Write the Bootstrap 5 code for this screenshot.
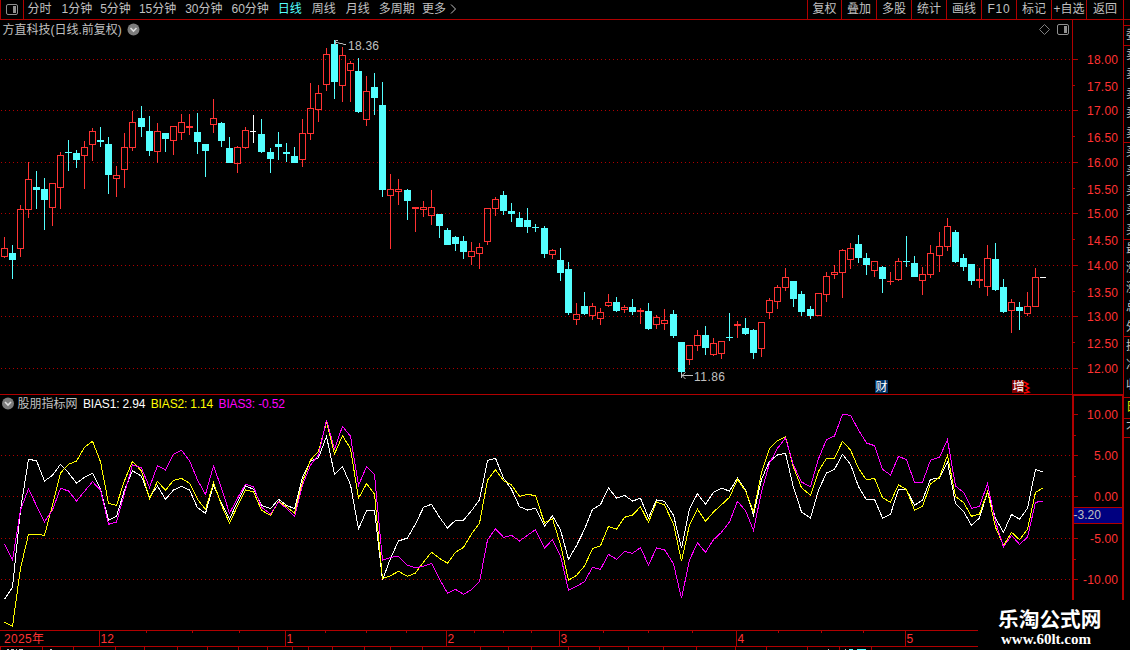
<!DOCTYPE html>
<html lang="zh-CN">
<head>
  <meta charset="UTF-8" />
  <title>方直科技 日线</title>
  <link href="https://cdn.jsdelivr.net/npm/bootstrap@5.3.0/dist/css/bootstrap.min.css" rel="stylesheet" />
  <style>
    :root { --line: #b00000; --rojo: #ff3232; --gris: #c0c0c0; }
    body { width: 1130px; height: 650px; background: #000; color: var(--gris);
      font: 12px/1 "Liberation Sans", "Noto Sans CJK SC", sans-serif; }
    svg { display: block; flex: none; }
    .topbar { height: 20px; border-bottom: 1px solid var(--line); }
    .topbar span { line-height: 19px; white-space: nowrap; }
    .panel-btn { width: 24px; border-left: 1px solid var(--line); border-right: 1px solid var(--line); margin-right: 3.5px; }
    .p2 { width: 34px; } .p3 { width: 38.7px; } .p4 { width: 46.3px; } .pm { width: 43.3px; }
    .activo { color: #54ffff; }
    .tools { margin-left: auto; width: 316px; }
    .tools span { width: 35px; border-left: 1px solid var(--line); text-align: center; }
    .tools span:first-child { width: 34px; }
    .tools span:last-child { width: 37px; }
    .tools .f10 { letter-spacing: .8px; }
    .lado { width: 7px; border-left: 1px solid var(--line); }
    .left-col { width: 1123px; }
    .pane-title { height: 19px; width: 1073px; border-right: 1px solid var(--line); padding: 0 3px 0 2.5px; }
    .bias-title { height: 17px; width: 1074px; border-right: 2px solid var(--line); padding-left: 2px; }
    .bias-title span { margin-right: 6px; white-space: pre; }
    .bias-title .valor { letter-spacing: -.15px; margin-left: -.6px; }
    #bias { overflow: visible; }
    .side { width: 7px; border-left: 1px solid var(--line); padding-left: 2px; }
    .side div { white-space: nowrap; height: 19.4px; line-height: 19px; }
    .side .grupo { height: 97px; border-top: 1px solid var(--line); margin-left: -2px; padding-left: 2px; }
    .marca { right: 0; bottom: 0; width: 152px; height: 50px; background: #000; color: #fff; padding: 5px 0 0 20px; }
    .marca .nombre { font: bold 20.7px/27px "Noto Sans CJK SC", sans-serif; white-space: nowrap; }
    .marca .web { font: bold 15px/14px "Liberation Serif", serif; padding-left: 3px; }
  </style>
</head>
<body class="m-0 overflow-hidden position-relative d-flex flex-column">
  <!-- Barra de periodos -->
  <div class="topbar d-flex flex-shrink-0">
    <div class="panel-btn d-flex align-items-center justify-content-center">
      <svg width="12" height="11"><rect x=".5" y=".5" width="11" height="10" rx="1.5" fill="none" stroke="#909090"/><rect x="7" y="2" width="3" height="7" fill="#909090"/></svg>
    </div>
    <span class="p2">分时</span><span class="p3">1分钟</span><span class="p3">5分钟</span>
    <span class="p4">15分钟</span><span class="p4">30分钟</span><span class="p4">60分钟</span>
    <span class="p2 activo">日线</span><span class="p2">周线</span><span style="width:33px">月线</span>
    <span class="pm">多周期</span><span>更多</span>
    <svg width="11" height="18"><path d="M5 4.5L9.5 9L5 13.5" fill="none" stroke="#c0c0c0"/></svg>
    <div class="tools d-flex flex-shrink-0">
      <span>复权</span><span>叠加</span><span>多股</span><span>统计</span><span>画线</span><span class="f10">F10</span><span>标记</span><span>+自选</span><span>返回</span>
    </div>
    <div class="lado"></div>
  </div>

  <div class="d-flex">
    <div class="left-col">
      <!-- Precio -->
      <div class="pane-title d-flex align-items-center">
        <span>方直科技(日线.前复权)</span>
        <svg class="ms-1" width="14" height="14"><circle cx="7.5" cy="6.5" r="6" fill="#7c7c7c"/><path d="M4.5 5L7.5 8L10.5 5" fill="none" stroke="#ddd" stroke-width="1.6"/></svg>
        <svg class="ms-auto" width="31" height="13"><path d="M6.5 1.5L11.5 6.5L6.5 11.5L1.5 6.5Z" fill="none" stroke="#808080"/><rect x="19.5" y="1.5" width="11" height="10" rx="1.5" fill="none" stroke="#909090"/><rect x="26" y="3" width="3" height="7" fill="#909090"/></svg>
      </div>
      <svg id="precio" width="1123" height="356" viewBox="0 39 1123 356"></svg>
      <!-- Indicador -->
      <div class="bias-title d-flex align-items-center">
        <svg width="13" height="14"><circle cx="6" cy="6.5" r="6" fill="#7c7c7c"/><path d="M3 5L6 8L9 5" fill="none" stroke="#ddd" stroke-width="1.6"/></svg>
        <span style="margin-left:2.5px">股朋指标网</span>
        <span class="valor text-white">BIAS1: 2.94</span>
        <span class="valor" style="color:#ffff00">BIAS2: 1.14</span>
        <span class="valor" style="color:#ff00ff">BIAS3: -0.52</span>
      </div>
      <svg id="bias" width="1123" height="218" viewBox="0 412 1123 218"></svg>
      <svg id="fechas" width="1123" height="20" viewBox="0 630 1123 20"></svg>
    </div>
    <!-- Columna de cotizaciones, cortada por el borde -->
    <div class="side overflow-hidden">
      <div style="height:5px"></div>
      <div style="border-top:1px solid var(--line);margin-left:-2px;padding-left:2px;height:20px">委比</div>
      <div class="grupo"><div>卖五</div><div>卖四</div><div>卖三</div><div>卖二</div><div>卖一</div></div>
      <div class="grupo"><div>买一</div><div>买二</div><div>买三</div><div>买四</div><div>买五</div></div>
      <div class="grupo"><div>最新</div><div>涨跌</div><div>涨幅</div><div>总量</div><div>外盘</div></div>
      <div class="grupo" style="height:61px"><div>换手</div><div>净资</div><div>收益</div></div>
      <div class="grupo" style="height:21px;color:#e0e000">日</div>
      <div class="grupo" style="height:19px">不</div>
      <div class="grupo"></div>
    </div>
  </div>

  <div class="marca position-absolute">
    <div class="nombre">乐淘公式网</div>
    <div class="web">www.60lt.com</div>
  </div>

  <script>
    // maximo, techo, base, minimo, tipo (r sube, c baja, w sin cambio)
    const velas = `237,248,257,258,r 245,253,260,279,c 205,209,249,257,r 162,179,210,218,r 171,187,190,209,c
178,189,200,230,c 183,183,208,226,r 152,155,188,209,r 140,152,153,171,c 150,153,160,168,c
141,147,156,189,r 128,131,145,161,r 127,140,142,147,c 137,144,175,194,c 166,175,179,197,r
133,147,170,188,r 111,122,148,151,r 106,118,127,137,c 116,131,151,156,c 123,131,152,163,r
133,133,139,152,c 126,126,141,155,r 114,122,133,140,r 114,126,128,135,r 113,132,142,154,c
144,144,151,177,c 99,118,125,133,r 122,123,141,147,c 137,148,163,163,c 146,147,164,173,r
127,130,148,149,r 115,131,132,143,w 119,134,152,153,c 148,152,159,173,c 132,144,147,160,c
143,152,154,162,c 147,156,163,163,c 119,133,160,167,r 83,108,134,140,r 85,93,110,122,r
48,54,85,91,r 40,44,82,99,c 47,55,86,102,r 61,63,71,102,r 58,71,112,113,c
76,91,120,126,r 73,87,98,115,c 82,105,190,197,c 174,189,196,249,r 179,189,192,205,r
189,190,201,220,c 207,207,209,232,r 201,207,210,217,r 190,207,216,225,r 214,214,226,238,c
228,230,245,245,c 236,237,244,251,c 236,241,252,259,c 242,251,257,265,r 243,247,254,269,r
208,208,242,245,r 197,199,209,216,r 191,195,211,215,c 203,211,214,222,c 212,218,227,227,c
208,220,227,233,c 224,227,228,232,c 226,228,254,258,c 249,250,255,259,r 248,260,273,281,c
262,269,313,315,c 303,314,320,325,r 292,306,314,315,c 303,306,316,320,r 308,312,319,325,r
294,302,306,307,r 297,302,311,312,c 305,307,310,313,r 299,307,312,315,c 308,310,312,324,r
303,311,329,330,c 315,317,325,329,r 309,320,324,330,r 310,314,336,338,c 342,342,372,374,c
345,345,360,365,r 330,335,346,351,r 326,335,348,355,c 338,343,355,356,r 341,341,354,359,r
313,337,338,341,c 321,324,326,338,r 318,328,334,335,c 329,330,353,359,c 322,322,349,357,r
298,300,313,319,r 285,287,302,309,r 268,277,288,291,r 281,281,299,307,c 291,294,312,316,c
306,309,316,319,c 293,293,316,316,r 272,276,295,302,r 265,272,275,279,r 249,250,273,298,r
243,248,260,269,r 235,244,258,263,c 253,258,265,275,c 261,261,271,277,r 266,267,279,293,c
272,281,282,285,r 258,261,280,281,r 236,261,262,267,c 256,263,277,277,c 267,274,281,295,r
245,253,275,278,r 232,246,256,272,r 218,226,247,251,r 230,232,262,263,c 254,258,267,271,c
264,264,281,285,c 268,279,281,288,r 245,258,287,296,r 243,259,290,291,c 279,287,312,313,c
299,302,311,333,r 302,307,311,330,c 292,306,314,316,r 268,277,307,307,r`.split(/\s+/).map(v => v.split(","));

    // series BIAS en tercios de pixel, medidas desde y=390
    const series = [
      ["#ffffff", [628,592,360,208,212,273,256,223,248,280,262,250,298,390,379,300,242,259,322,288,328,300,289,300,353,370,285,340,388,335,287,298,346,356,328,346,356,
        262,213,203,139,253,230,284,417,362,361,570,505,453,444,402,352,343,382,414,391,391,362,330,211,205,264,298,350,360,355,409,377,420,508,467,418,
        358,344,293,325,316,333,325,384,330,334,376,475,356,311,343,307,295,303,265,300,375,268,214,195,190,293,366,384,300,249,238,193,223,290,330,
        328,384,373,298,299,346,330,268,265,215,340,364,406,384,305,385,427,373,388,355,238,246]],
      ["#ffff00", [697,709,535,433,433,436,345,249,223,213,172,154,215,340,346,272,214,243,326,274,301,271,265,280,328,358,278,345,400,348,300,305,361,376,334,350,370,
        275,210,184,97,192,137,176,325,281,312,566,557,544,559,549,516,487,505,520,487,472,432,400,270,239,272,285,319,313,317,399,386,464,571,556,528,
        476,467,409,418,382,375,350,397,336,345,402,514,404,358,394,366,344,322,268,303,365,248,175,152,140,232,293,316,244,205,205,154,180,235,270,
        265,323,337,284,299,360,349,282,262,196,320,337,379,372,305,412,467,427,449,418,307,295]],
      ["#ff00ff", [463,511,360,296,347,395,360,295,303,333,304,275,300,403,396,310,224,234,292,227,240,193,181,212,270,313,228,295,370,325,283,290,352,372,336,355,380,
        285,225,195,89,177,109,139,286,230,254,511,502,499,526,533,529,520,567,609,598,613,599,575,450,416,442,436,453,436,419,474,449,497,601,589,575,
        532,538,493,508,484,490,473,525,474,479,521,625,510,458,487,449,427,396,334,362,421,305,220,175,144,226,276,290,206,149,138,73,76,120,159,
        167,238,255,199,209,277,277,211,202,149,288,307,355,349,281,395,471,436,463,442,337,334]]
    ];

    const posX = i => Math.floor(4.02 + 8.0602 * i);
    const rect = (x, y, w, h, c) => `<rect x="${x}" y="${y}" width="${w}" height="${h}" fill="${c}"/>`;
    const texto = (x, y, t, c, w, extra = "") => `<text x="${x}" y="${y}" fill="${c}" ${w ? `textLength="${w}"` : ""} ${extra}>${t}</text>`;
    const rejilla = y => `<path d="M1 ${y + .5}H1072" stroke="#b00000" stroke-dasharray="1 3" shape-rendering="crispEdges"/>`;
    const L = "#b00000", R = "#ff3232";

    // Grafico de precio
    let p = "";
    [59, 110, 162, 213, 265, 316, 368].forEach((y, i) => {
      p += rejilla(y) + rect(1073, y, 5, 1, L);
      p += texto(1087, y + 5, (18 - i).toFixed(2), R, 31);
    });
    [85, 136, 188, 239, 291, 342].forEach((y, i) => {
      p += rect(1073, y, 2, 1, L) + texto(1087, y + 6, (17.5 - i).toFixed(2), R, 31);
    });
    velas.forEach(([hi, top, base, lo, tipo], i) => {
      hi = +hi; top = +top; base = +base; lo = +lo;
      const x = posX(i);
      const c = { r: R, c: "#54ffff", w: "#ffffff" }[tipo];
      if (top > hi) p += rect(x, hi, 1, top - hi, c);
      if (lo > base) p += rect(x, base, 1, lo - base, c);
      if (tipo === "r" && base - top > 2) {
        p += `<rect x="${x - 2.5}" y="${top + .5}" width="6" height="${base - top - 1}" fill="none" stroke="${c}"/>`;
      } else {
        p += rect(x - 3, top, tipo === "w" ? 6 : 7, base - top, c);
      }
    });
    p += rect(1040, 277, 6, 1, "#fff");
    p += `<path d="M335.5 45V40.5H338M335 42.5H337.5L340 43.5H342L344 44.5H346" fill="none" stroke="#c0c0c0"/>`;
    p += texto(348, 50, "18.36", "#c0c0c0", 31);
    p += `<path d="M682 375.5H693M685.5 372.5L682 375.5L685.5 379M681.5 373V378" fill="none" stroke="#c0c0c0"/>`;
    p += texto(694, 381, "11.86", "#c0c0c0", 31);
    p += rect(875, 380, 13, 13, "#003468") + texto(875.5, 391, "财", "#fff", 12);
    p += `<path d="M1024 382l4 2l-3 2l4 2l-3 2l3 2l-5 1" fill="none" stroke="#f00" stroke-width="1.5"/>`;
    p += rect(1012, 380, 12, 13, "#800000") + texto(1012.5, 391, "增", "#fff", 12);
    p += rect(1072, 39, 1, 355, L) + rect(0, 394, 1123, 1, L);
    document.getElementById("precio").innerHTML = p;

    // Grafico BIAS
    let b = "";
    [455, 496, 538, 579].forEach(y => b += rejilla(y));
    [[414, "10.00", 1087], [455, "5.00", 1094], [496, "0.00", 1094], [538, "-5.00", 1090], [579, "-10.00", 1083]].forEach(([y, t, x]) => {
      b += rect(1074, y, 4, 1, L) + texto(x, y + 5, t, R, 1118 - x);
    });
    [435, 476, 559].forEach(y => b += rect(1074, y, 2, 1, L));
    series.forEach(([c, ys]) => {
      const pts = ys.map((y, i) => `${i === 129 ? 1042.5 : posX(i) + .5},${(y / 3 + 390).toFixed(1)}`).join(" ");
      b += `<polyline points="${pts}" fill="none" stroke="${c}" shape-rendering="crispEdges"/>`;
    });
    b += rect(1072, 412, 2, 188, L) + rect(1072, 395, 51, 1, L) + rect(1122, 395, 1, 205, L);
    b += rect(1074, 507, 48, 17, L) + rect(1074, 508, 48, 15, "#000080") + texto(1073.5, 519, "-3.20", "#c0c0c0", 27.5);
    document.getElementById("bias").innerHTML = b;

    // Eje de fechas
    let f = rect(0, 630, 978, 1, L) + rect(0, 646, 978, 1, L);
    f += texto(4, 643, "2025年", R, 40);
    [[99, "12"], [285, "1"], [446, "2"], [559, "3"], [736, "4"], [905, "5"]].forEach(([x, t]) => {
      f += rect(x, 630, 1, 16, L) + texto(x + 1.5, 643, t, R);
    });
    [146, 192, 239, 325, 366, 406, 474, 503, 531, 603, 648, 692, 778, 821, 863].forEach(x => f += rect(x, 631, 1, 2, L));
    [0, 42, 73, 115, 144, 177, 207, 238, 267, 292, 308, 332, 364, 390, 422, 480, 508, 531, 568, 599, 628, 663, 696, 735, 766, 807, 839, 871].forEach(x => f += rect(x, 647, 1, 3, L));
    [[7, 2], [11, 3], [16, 1], [19, 4], [50, 2], [828, 1], [845, 1]].forEach(([x, w]) => f += rect(x, 649, w, 1, "#c0c0c0"));
    [[849, 4], [857, 9]].forEach(([x, w]) => f += rect(x, 649, w, 1, "#54ffff"));
    document.getElementById("fechas").innerHTML = f;
  </script>
</body>
</html>
